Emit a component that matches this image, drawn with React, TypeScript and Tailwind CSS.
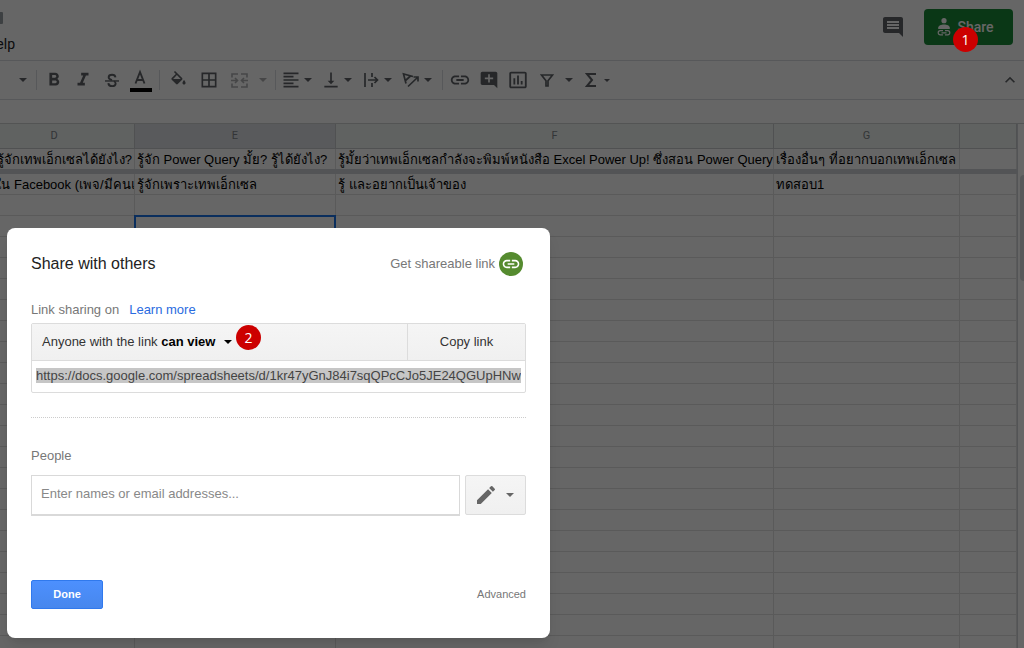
import type { ReactNode } from 'react'
import {
  MdAddComment,
  MdBorderAll,
  MdComment,
  MdEdit,
  MdFormatAlignLeft,
  MdFormatBold,
  MdFormatItalic,
  MdInsertChartOutlined,
  MdKeyboardArrowUp,
  MdLink,
  MdVerticalAlignBottom,
} from 'react-icons/md'

const shareUrl =
  'https://docs.google.com/spreadsheets/d/1kr47yGnJ84i7sqQPcCJo5JE24QGUpHNw'

const emptyRows = Array.from({ length: 22 }, (_, i) => i)

function Tool({ label, className = 'w-[29px]', children }: { label: string; className?: string; children: ReactNode }) {
  return (
    <button aria-label={label} className={`flex h-5 shrink-0 items-center justify-center ${className}`}>
      {children}
    </button>
  )
}

function ToolGroup({ children }: { children: ReactNode }) {
  return <div className="flex h-5 items-center border-l border-[#dadce0] pl-[2px] pr-1">{children}</div>
}

function Caret({ size = 8 }: { size?: number }) {
  return (
    <span className="flex w-[14px] justify-center">
      <svg width={size} height={size / 2} viewBox="0 0 8 4" fill="currentColor">
        <path d="M0 0h8L4 4z" />
      </svg>
    </span>
  )
}

function Badge({ className, children }: { className: string; children: ReactNode }) {
  return (
    <span
      className={`absolute flex size-[25px] items-center justify-center rounded-full bg-[#cc0000] font-['Open_Sans',sans-serif] text-sm text-white ${className}`}
    >
      {children}
    </span>
  )
}

function Header() {
  return (
    <header className="flex h-[61px] shrink-0 justify-between border-b border-[#dadce0] pr-[11px]">
      <div className="pt-3">
        <span className="block h-3 w-[3px] rounded-r-[1px] bg-[#9aa0a6]" />
        <div className="mt-[10px] flex h-5 w-[15px] items-center justify-end overflow-hidden">
          <button className="font-[Roboto,sans-serif] text-sm text-[#202124]">Help</button>
        </div>
      </div>
      <div className="mt-[9px] flex h-9 items-center gap-[19px]">
        <button aria-label="Open comment history" className="text-[#5f6368]">
          <MdComment size={24} />
        </button>
        <button className="flex h-9 w-[89px] items-center justify-center gap-[6px] rounded bg-[#1a8a38] pr-[6px] font-[Roboto,sans-serif] text-sm font-medium text-white">
          <svg width="14" height="18" viewBox="0 0 14 18">
            <circle cx="7" cy="2.700" r="2.600" fill="currentColor" />
            <path d="M1.200 11V9.800C1.200 7.600 4.200 6.400 7 6.400s5.800 1.200 5.800 3.400V11z" fill="currentColor" />
            <path
              d="M6 12.700H3.300a2.100 2.100 0 0 0 0 4.200H6M8 12.700h2.700a2.100 2.100 0 0 1 0 4.200H8M4.500 14.800h5"
              fill="none"
              stroke="currentColor"
              strokeWidth="1.200"
            />
          </svg>
          Share
        </button>
      </div>
    </header>
  )
}

function Toolbar() {
  return (
    <div className="flex h-[39px] shrink-0 items-center justify-between border-b border-[#dadce0] pr-1 text-[#5f6368]">
      <div className="flex items-center pl-4">
        <Tool label="Font size" className="w-5 pr-[6px]">
          <Caret />
        </Tool>
        <ToolGroup>
          <Tool label="Bold">
            <MdFormatBold size={22} />
          </Tool>
          <Tool label="Italic">
            <MdFormatItalic size={22} />
          </Tool>
          <Tool label="Strikethrough">
            <svg width="14" height="15" viewBox="0 0 15 15" fill="none" stroke="currentColor">
              <path d="M0 8h15" strokeWidth="1.500" />
              <path
                d="M11.200 4.200C11 2.400 9.600 1.400 7.600 1.400c-2.200 0-3.700 1.100-3.700 2.700 0 1.300 1 2.200 3.600 2.900M9.500 8.300c1.400.6 1.900 1.300 1.900 2.300 0 1.700-1.500 2.900-3.800 2.900-2.400 0-3.900-1.200-4-3.200"
                strokeWidth="2"
              />
            </svg>
          </Tool>
          <Tool label="Text color">
            <svg width="22" height="24" viewBox="0 0 22 24">
              <path d="M5.500 15.500 10 4l4.500 11.500M7 12h6" fill="none" stroke="currentColor" strokeWidth="1.900" />
              <path d="M0 20h22v4H0z" fill="#000" />
            </svg>
          </Tool>
        </ToolGroup>
        <ToolGroup>
          <Tool label="Fill color" className="w-8">
            <svg width="19" height="19" viewBox="0 0 24 24" fill="currentColor">
              <path d="M16.560 8.940 7.620 0 6.210 1.410l2.380 2.380-5.150 5.150c-.59.59-.59 1.540 0 2.120l5.500 5.500c.29.29.68.44 1.060.44s.77-.15 1.060-.44l5.500-5.500c.59-.58.59-1.530 0-2.120zM5.210 10 10 5.210 14.790 10H5.210zM19 11.500s-2 2.170-2 3.500c0 1.100.9 2 2 2s2-.9 2-2c0-1.330-2-3.500-2-3.500z" />
            </svg>
          </Tool>
          <Tool label="Borders">
            <MdBorderAll size={20} />
          </Tool>
          <Tool label="Merge cells" className="w-8 opacity-50">
            <svg width="17" height="15" viewBox="0 0 17 15" fill="none" stroke="currentColor" strokeWidth="1.600">
              <path d="M1 4.500V1h6M10 1h6v3.500M1 10.500V14h6M10 14h6v-3.500M0 7.500h6M17 7.500h-6M4 5l2.500 2.500L4 10M13 5l-2.500 2.500L13 10" />
            </svg>
          </Tool>
          <Tool label="Merge type" className="w-4 opacity-50">
            <Caret />
          </Tool>
        </ToolGroup>
        <ToolGroup>
          <Tool label="Horizontal align" className="w-10">
            <MdFormatAlignLeft size={20} />
            <Caret />
          </Tool>
          <Tool label="Vertical align" className="w-10">
            <MdVerticalAlignBottom size={20} />
            <Caret />
          </Tool>
          <Tool label="Text wrapping" className="w-10">
            <svg width="20" height="16" viewBox="0 0 20 16" fill="none" stroke="currentColor" strokeWidth="1.700">
              <path d="M4 1v14M11 1v4M11 11v4M7 8h9M13.500 5l3 3-3 3" />
            </svg>
            <Caret />
          </Tool>
          <Tool label="Text rotation" className="w-10">
            <svg width="20" height="16" viewBox="0 0 20 16" fill="none" stroke="currentColor" strokeWidth="1.700">
              <path d="M5 11.500 2.500 2l9.500 2.500M4.500 8.500l5-4.500M7 14.500l9.500-9M12.500 5H17v4.500" />
            </svg>
            <Caret />
          </Tool>
        </ToolGroup>
        <ToolGroup>
          <Tool label="Insert link">
            <MdLink size={22} />
          </Tool>
          <Tool label="Insert comment">
            <MdAddComment size={20} />
          </Tool>
          <Tool label="Insert chart">
            <MdInsertChartOutlined size={22} />
          </Tool>
          <Tool label="Create a filter">
            <svg width="14" height="13" viewBox="0 0 14 13" fill="none" stroke="currentColor" strokeWidth="1.700">
              <path d="M1.500 1h11L8 6.800V12H6V6.800z" />
            </svg>
          </Tool>
          <Tool label="Filter views" className="w-4">
            <Caret />
          </Tool>
          <Tool label="Functions" className="w-10">
            <span className="flex w-5 justify-center">
              <svg width="11" height="14" viewBox="0 0 11 14" fill="none" stroke="currentColor" strokeWidth="2">
                <path d="M11 1H2l5 6-5 6h9" />
              </svg>
            </span>
            <Caret size={6} />
          </Tool>
        </ToolGroup>
      </div>
      <button aria-label="Hide the menus">
        <MdKeyboardArrowUp size={20} />
      </button>
    </div>
  )
}

const th = 'h-[25px] border-b border-r border-[#c8cbcc] bg-[#f0f4f2] p-0 text-[11px] font-normal text-[#80868b]'
const frozen = 'h-5 overflow-hidden whitespace-nowrap border-r border-[#e0e1e1] p-0'
const td = 'h-[21px] overflow-hidden whitespace-nowrap border-b border-r border-[#e0e1e1] p-0'

function Sheet() {
  return (
    <div className="flex min-h-0 flex-1 overflow-hidden">
      <div className="min-w-0 flex-1">
        <table className="w-full table-fixed border-separate border-spacing-0 font-['Liberation_Sans',sans-serif] text-[13px] leading-[22px] text-black">
          <colgroup>
            <col className="w-[135px]" />
            <col className="w-[201px]" />
            <col className="w-[438px]" />
            <col className="w-[186px]" />
            <col />
          </colgroup>
          <thead className="font-[Roboto,sans-serif]">
            <tr>
              <th className={`${th} pr-[26px]`}>D</th>
              <th className={`${th} bg-[#dfe2e5]!`}>E</th>
              <th className={th}>F</th>
              <th className={th}>G</th>
              <th className={th}></th>
            </tr>
          </thead>
          <tbody>
            <tr>
              <td className={frozen}>
                <div className="flex h-5 justify-end pr-[2px]">รู้จักเทพเอ็กเซลได้ยังไง?</div>
              </td>
              <td className={frozen}>
                <div className="h-5 pl-[2px]">รู้จัก Power Query มั้ย? รู้ได้ยังไง?</div>
              </td>
              <td className={frozen}>
                <div className="h-5 pl-[2px]">รู้มั้ยว่าเทพเอ็กเซลกำลังจะพิมพ์หนังสือ Excel Power Up! ซึ่งสอน Power Query</div>
              </td>
              <td className={frozen}>
                <div className="h-5 pl-[2px]">เรื่องอื่นๆ ที่อยากบอกเทพเอ็กเซล</div>
              </td>
              <td className={frozen}></td>
            </tr>
            <tr>
              <td colSpan={5} className="h-[5px] bg-[#d0d3d8] p-0"></td>
            </tr>
            <tr>
              <td className={td}>
                <div className="flex h-5 justify-center">ใน Facebook (เพจ/มีคนแ</div>
              </td>
              <td className={td}>
                <div className="h-5 pl-[2px]">รู้จักเพราะเทพเอ็กเซล</div>
              </td>
              <td className={td}>
                <div className="h-5 pl-[2px]">รู้ และอยากเป็นเจ้าของ</div>
              </td>
              <td className={td}>
                <div className="h-5 pl-[2px]">ทดสอบ1</div>
              </td>
              <td className={td}></td>
            </tr>
            {emptyRows.map((row) => (
              <tr key={row}>
                <td className={td}></td>
                {row === 1 ? (
                  <td className={`${td} relative overflow-visible!`}>
                    {/* active cell */}
                    <div className="absolute -inset-px border-2 border-[#1a73e8]" />
                  </td>
                ) : (
                  <td className={td}></td>
                )}
                <td className={td}></td>
                <td className={td}></td>
                <td className={td}></td>
              </tr>
            ))}
          </tbody>
        </table>
      </div>
      {/* scrollbar */}
      <div className="w-[7px] border-l border-[#d0d3d8] pl-[2px] pt-[51px]">
        <div className="h-[106px] rounded-l bg-[#dadce0]" />
      </div>
    </div>
  )
}

function ShareDialog() {
  return (
    <section
      role="dialog"
      aria-labelledby="share-title"
      className="flex h-[410px] w-[543px] flex-col rounded-lg bg-white px-6 pb-[29px] pt-6 font-['Liberation_Sans',sans-serif] text-[13px] text-[#777777] shadow-lg"
    >
      <div className="flex h-6 items-center justify-between">
        <h1 id="share-title" className="text-base text-[#222222]">
          Share with others
        </h1>
        <button className="flex items-center gap-1 pr-[3px]">
          Get shareable link
          <span className="flex size-6 items-center justify-center rounded-full bg-[#558b2f] text-white">
            <MdLink size={20} />
          </span>
        </button>
      </div>

      <p className="mt-6 leading-5">
        Link sharing on
        <a href="#" className="ml-[10px] text-[#2a6be0]">
          Learn more
        </a>
      </p>

      <div className="mt-[3px] rounded-xs border border-[#dcdcdc]">
        <div className="flex h-[37px] border-b border-[#dcdcdc] bg-linear-to-b from-[#f5f5f5] to-[#f0f0f0] text-[#333333]">
          <button className="relative flex flex-1 items-center border-r border-[#dcdcdc] pl-[10px]">
            <span>
              Anyone with the link <b className="text-black">can view</b>
            </span>
            <span className="ml-[6px] text-black">
              <Caret />
            </span>
            <Badge className="left-[204px] top-px">2</Badge>
          </button>
          <button className="w-[117px]">Copy link</button>
        </div>
        <div className="h-[31px] px-1 pt-[7px]">
          <input
            aria-label="Shareable link"
            readOnly
            value={shareUrl}
            className="block h-[15px] w-full bg-[#c6c6c6] leading-[15px] text-[#444444] outline-none"
          />
        </div>
      </div>

      <div className="mt-6 border-t border-dotted border-[#cccccc]" />

      <label htmlFor="people" className="mt-7 leading-5">
        People
      </label>
      <div className="mt-[9px] flex gap-[5px]">
        <input
          id="people"
          placeholder="Enter names or email addresses..."
          className="h-[41px] min-w-0 flex-1 border border-b-2 border-[#d9d9d9] px-[9px] pb-1 outline-none placeholder:text-[#888888]"
        />
        <button
          aria-label="Can edit"
          className="flex h-10 w-[61px] items-center justify-center gap-[5px] rounded-xs border border-[#dcdcdc] bg-linear-to-b from-[#f5f5f5] to-[#f0f0f0] text-[#666666]"
        >
          <MdEdit size={24} />
          <Caret />
        </button>
      </div>

      <div className="mt-auto flex items-center justify-between text-[11px]">
        <button className="h-[29px] w-[72px] rounded-xs border border-[#3079ed] bg-linear-to-b from-[#4d90fe] to-[#4787ed] font-bold text-white">
          Done
        </button>
        <button>Advanced</button>
      </div>
    </section>
  )
}

export default function App() {
  return (
    <div className="relative flex h-screen flex-col overflow-hidden bg-white">
      <Header />
      <Toolbar />
      <div className="h-6 shrink-0 border-b border-[#d0d3d3]" />
      <Sheet />
      <div className="absolute inset-0 bg-black/60 pl-[7px] pt-[228px]">
        <ShareDialog />
        <Badge className="right-[46px] top-[27px]">1</Badge>
      </div>
    </div>
  )
}
